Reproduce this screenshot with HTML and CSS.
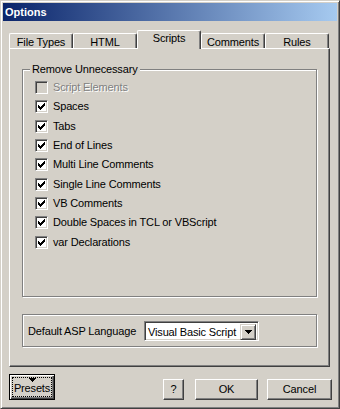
FILE: index.html
```html
<!DOCTYPE html>
<html>
<head>
<meta charset="utf-8">
<title>Options</title>
<link rel="stylesheet" href="styles.css">
</head>
<body>
<div class="window">
  <div class="titlebar">Options</div>
  <div class="content">
    <div class="tabs">
      <div class="tab">File Types</div>
      <div class="tab">HTML</div>
      <div class="tab active">Scripts</div>
      <div class="tab">Comments</div>
      <div class="tab">Rules</div>
    </div>
    <div class="panel">
      <div class="group group-remove">
        <div class="group-title">Remove Unnecessary</div>
        <div class="checklist">
          <div class="check disabled"><span class="box"></span><span class="label">Script Elements</span></div>
          <div class="check"><span class="box"><svg class="tick" viewBox="0 0 11 11" width="11" height="11"><path d="M8 2h1v1h-1z M7 3h2v1h-2z M2 4h1v1h-1z M6 4h3v1h-3z M2 5h2v1h-2z M5 5h3v1h-3z M2 6h5v1h-5z M3 7h3v1h-3z M4 8h1v1h-1z"/></svg></span><span class="label">Spaces</span></div>
          <div class="check"><span class="box"><svg class="tick" viewBox="0 0 11 11" width="11" height="11"><path d="M8 2h1v1h-1z M7 3h2v1h-2z M2 4h1v1h-1z M6 4h3v1h-3z M2 5h2v1h-2z M5 5h3v1h-3z M2 6h5v1h-5z M3 7h3v1h-3z M4 8h1v1h-1z"/></svg></span><span class="label">Tabs</span></div>
          <div class="check"><span class="box"><svg class="tick" viewBox="0 0 11 11" width="11" height="11"><path d="M8 2h1v1h-1z M7 3h2v1h-2z M2 4h1v1h-1z M6 4h3v1h-3z M2 5h2v1h-2z M5 5h3v1h-3z M2 6h5v1h-5z M3 7h3v1h-3z M4 8h1v1h-1z"/></svg></span><span class="label">End of Lines</span></div>
          <div class="check"><span class="box"><svg class="tick" viewBox="0 0 11 11" width="11" height="11"><path d="M8 2h1v1h-1z M7 3h2v1h-2z M2 4h1v1h-1z M6 4h3v1h-3z M2 5h2v1h-2z M5 5h3v1h-3z M2 6h5v1h-5z M3 7h3v1h-3z M4 8h1v1h-1z"/></svg></span><span class="label">Multi Line Comments</span></div>
          <div class="check"><span class="box"><svg class="tick" viewBox="0 0 11 11" width="11" height="11"><path d="M8 2h1v1h-1z M7 3h2v1h-2z M2 4h1v1h-1z M6 4h3v1h-3z M2 5h2v1h-2z M5 5h3v1h-3z M2 6h5v1h-5z M3 7h3v1h-3z M4 8h1v1h-1z"/></svg></span><span class="label">Single Line Comments</span></div>
          <div class="check"><span class="box"><svg class="tick" viewBox="0 0 11 11" width="11" height="11"><path d="M8 2h1v1h-1z M7 3h2v1h-2z M2 4h1v1h-1z M6 4h3v1h-3z M2 5h2v1h-2z M5 5h3v1h-3z M2 6h5v1h-5z M3 7h3v1h-3z M4 8h1v1h-1z"/></svg></span><span class="label">VB Comments</span></div>
          <div class="check"><span class="box"><svg class="tick" viewBox="0 0 11 11" width="11" height="11"><path d="M8 2h1v1h-1z M7 3h2v1h-2z M2 4h1v1h-1z M6 4h3v1h-3z M2 5h2v1h-2z M5 5h3v1h-3z M2 6h5v1h-5z M3 7h3v1h-3z M4 8h1v1h-1z"/></svg></span><span class="label">Double Spaces in TCL or VBScript</span></div>
          <div class="check"><span class="box"><svg class="tick" viewBox="0 0 11 11" width="11" height="11"><path d="M8 2h1v1h-1z M7 3h2v1h-2z M2 4h1v1h-1z M6 4h3v1h-3z M2 5h2v1h-2z M5 5h3v1h-3z M2 6h5v1h-5z M3 7h3v1h-3z M4 8h1v1h-1z"/></svg></span><span class="label">var Declarations</span></div>
        </div>
      </div>
      <div class="group group-lang">
        <span class="lang-label">Default ASP Language</span>
        <div class="combo">
          <span class="combo-value">Visual Basic Script</span>
          <span class="combo-btn"><svg class="arrow" viewBox="0 0 7 4" width="7" height="4"><path d="M0 0h7v1h-7z M1 1h5v1h-5z M2 2h3v1h-3z M3 3h1v1h-1z"/></svg></span>
        </div>
      </div>
    </div>
    <div class="buttons">
      <button class="btn presets"><span class="focus"><svg class="arrow" viewBox="0 0 7 4" width="7" height="4"><path d="M0 0h7v1h-7z M1 1h5v1h-5z M2 2h3v1h-3z M3 3h1v1h-1z"/></svg><span class="presets-text">Presets</span></span></button>
      <button class="btn help">?</button>
      <button class="btn ok">OK</button>
      <button class="btn cancel">Cancel</button>
    </div>
  </div>
</div>
</body>
</html>
```
FILE: styles.css
```css
* {
  box-sizing: border-box;
}

html, body {
  margin: 0;
  padding: 0;
  background: #D4D0C8;
}

body {
  font-family: "Liberation Sans", Arial, sans-serif;
  font-size: 11px;
  letter-spacing: -0.15px;
  color: #000;
}

.window {
  width: 340px;
  height: 409px;
  background: #D4D0C8;
  border: 1px solid;
  border-color: #D4D0C8 #404040 #404040 #D4D0C8;
  box-shadow: inset 1px 1px #fff, inset -1px -1px #808080;
  padding: 2px;
  display: flex;
  flex-direction: column;
}

.titlebar {
  height: 18px;
  line-height: 18px;
  padding-left: 2px;
  font-weight: bold;
  letter-spacing: 0;
  color: #fff;
  background: linear-gradient(to right, #0A246A, #A6CAF0);
}

.content {
  display: flex;
  flex-direction: column;
  padding: 9px 5px 0 6px;
}

.tabs {
  display: flex;
  align-items: flex-end;
  height: 18px;
}

.tab {
  width: 64px;
  height: 15px;
  border: 1px solid;
  border-bottom: none;
  border-color: #fff #404040 #404040 #fff;
  border-radius: 2px 2px 0 0;
  box-shadow: inset -1px 0 #808080;
  text-align: center;
  line-height: 13px;
  padding-top: 2px;
  white-space: nowrap;
}

.tab.active {
  height: 19px;
  margin-bottom: -1px;
  padding-top: 1px;
  position: relative;
  background: #D4D0C8;
}

.panel {
  width: 321px;
  height: 319px;
  border: 1px solid;
  border-color: #fff #404040 #404040 #fff;
  box-shadow: inset -1px -1px #808080;
  padding: 20px 11px 0 12px;
  display: flex;
  flex-direction: column;
}

.group {
  width: 295px;
  border: 1px solid #808080;
  box-shadow: inset 1px 1px #fff, 1px 1px #fff;
}

.group-remove {
  height: 228px;
  display: flex;
  flex-direction: column;
}

.group-title {
  align-self: flex-start;
  margin: -7px 0 0 7px;
  padding: 0 2px;
  background: #D4D0C8;
  line-height: 13px;
  white-space: nowrap;
}

.checklist {
  display: flex;
  flex-direction: column;
  padding: 2px 0 0 12px;
}

.check {
  display: flex;
  align-items: center;
  height: 19.3px;
  gap: 5px;
  white-space: nowrap;
}

.box {
  display: block;
  width: 13px;
  height: 13px;
  flex: none;
  background: #fff;
  border: 1px solid;
  border-color: #808080 #fff #fff #808080;
  box-shadow: inset 1px 1px #404040, inset -1px -1px #D4D0C8;
}

.tick {
  display: block;
  fill: #000;
  shape-rendering: crispEdges;
}

.label {
  line-height: 13px;
}

.check.disabled .box {
  background: #D4D0C8;
}

.check.disabled .label {
  color: #808080;
  text-shadow: 1px 1px #fff;
}

.group-lang {
  margin-top: 17px;
  height: 33px;
  display: flex;
  align-items: flex-start;
  padding: 6px 0 0 5px;
}

.lang-label {
  width: 116px;
  line-height: 20px;
  white-space: nowrap;
}

.combo {
  width: 115px;
  height: 20px;
  display: flex;
  border: 1px solid;
  border-color: #808080 #fff #fff #808080;
  box-shadow: inset 1px 1px #404040, inset -1px -1px #D4D0C8;
  background: #fff;
  padding: 2px;
}

.combo-value {
  flex: 1;
  line-height: 16px;
  padding-left: 1px;
  white-space: nowrap;
}

.combo-btn {
  width: 16px;
  height: 16px;
  display: flex;
  align-items: center;
  justify-content: center;
  background: #D4D0C8;
  border: 1px solid;
  border-color: #D4D0C8 #404040 #404040 #D4D0C8;
  box-shadow: inset 1px 1px #fff, inset -1px -1px #808080;
}

.arrow {
  display: block;
  fill: #000;
  shape-rendering: crispEdges;
}

.buttons {
  display: flex;
  align-items: flex-end;
  height: 26px;
  margin-top: 7px;
}

.btn {
  font: inherit;
  letter-spacing: inherit;
  color: #000;
  height: 21px;
  padding: 0;
  margin: 0;
  background: #D4D0C8;
  border: 1px solid;
  border-color: #fff #404040 #404040 #fff;
  border-radius: 0;
  box-shadow: inset -1px -1px #808080;
  line-height: 17px;
}

.presets {
  width: 46px;
  height: 26px;
  padding: 2px;
  border: 1px solid #000;
  box-shadow: inset 1px 1px #fff, inset -1px -1px #404040, inset -2px -2px #808080;
}

.focus {
  display: flex;
  flex-direction: column;
  align-items: center;
  height: 100%;
  border: 1px dotted #000;
}

.presets-text {
  line-height: 13px;
}

.help {
  width: 21px;
  margin-left: auto;
}

.ok {
  width: 63px;
  margin-left: 11px;
}

.cancel {
  width: 65px;
  margin-left: 9px;
}
```
